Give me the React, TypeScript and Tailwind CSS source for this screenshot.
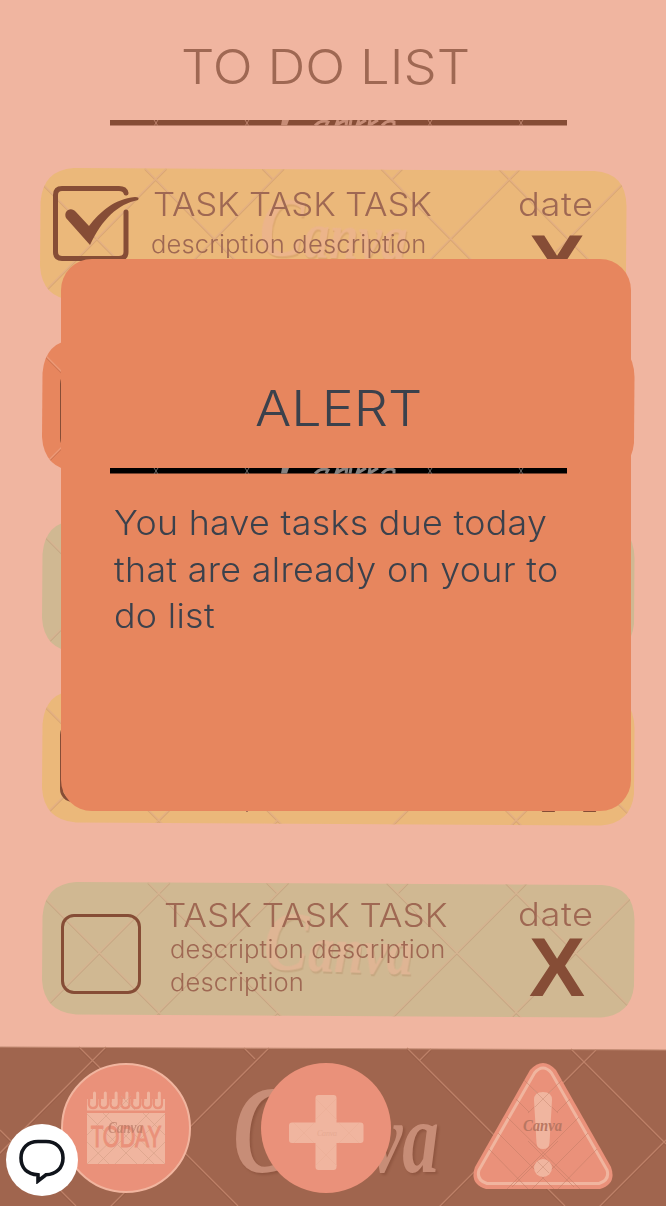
import React from 'react';

const INTER = "font-['Inter','Open_Sans',sans-serif]";

type Mark = { d: string; line: string; shade: string };

function Lines({ d, line, shade }: Mark) {
  return (
    <g fill="none" strokeWidth="1.3">
      <path d={d} stroke={shade} transform="translate(0 1.4)" />
      <path d={d} stroke={line} />
    </g>
  );
}

const CARD_LINES =
  'M-13 0L123 136M106 0L242 136M225 0L236 11M345 0L481 136M464 0L600 136M350 136L356 130M128 0L-8 136M247 0L111 136M367 0L356 11M486 0L350 136M605 0L469 136M230 136L236 130';

type Tint = { fill: string; line: string; shade: string; word: string };

const YELLOW: Tint = { fill: '#ebb87a', line: '#e4b083', shade: '#d9a673', word: '#ecb48a' };
const ORANGE: Tint = { fill: '#e7865e', line: '#ec9a78', shade: '#cd7350', word: '#ec9a78' };
const GREEN: Tint = { fill: '#d0b892', line: '#d6b491', shade: '#c5a683', word: '#dfb594' };

function CardShape({ tint, id }: { tint: Tint; id: string }) {
  const shape =
    'M34 0L561 3Q593 5 593.500 38L593 104Q590 133 560 135.500L34 132.500Q2 130 0 98L0.500 34Q3 2 34 0Z';
  return (
    <svg
      className="absolute inset-0 h-full w-full"
      viewBox="0 0 594 136"
      preserveAspectRatio="none"
      aria-hidden="true"
    >
      <clipPath id={id}>
        <path d={shape} />
      </clipPath>
      <path d={shape} fill={tint.fill} />
      <g clipPath={`url(#${id})`}>
        <Lines d={CARD_LINES} line={tint.line} shade={tint.shade} />
        <text
          x="222"
          y="90"
          textLength="150"
          lengthAdjust="spacingAndGlyphs"
          fontFamily="Liberation Serif"
          fontStyle="italic"
          fontWeight="700"
          fill={tint.word}
          transform="rotate(2 296 70)"
          className="drop-shadow-[1px_2px_0px_rgba(150,90,50,0.18)]"
        >
          <tspan fontSize="84">C</tspan>
          <tspan fontSize="66">anva</tspan>
        </text>
      </g>
    </svg>
  );
}

function CheckedBox() {
  return (
    <svg width="88" height="78" viewBox="0 0 88 78" fill="none" aria-label="Done">
      <path
        d="M74 8Q73 3.500 67 3.500H10Q3.500 3.500 3.500 10V67Q3.500 73.500 10 73.500H67Q74 73.500 74 67V27"
        stroke="#864d36"
        strokeWidth="5"
        strokeLinecap="round"
      />
      <path
        d="M14 33C11 26 19 21 24 27L37 41C48 27 62 14 83 12Q88 12 86 15C66 19 50 34 38 60Z"
        fill="#864d36"
      />
    </svg>
  );
}

function Rule({ color, mark }: { color: string; mark: string }) {
  return (
    <svg width="457" height="6" viewBox="0 0 457 6" className="block" aria-hidden="true">
      <rect width="457" height="5.500" fill={color} />
      <g stroke={mark} strokeWidth="0.800">
        <path d="M44 0L48 6M48 0L44 6M135 0L139 6M139 0L135 6M318 0L322 6M322 0L318 6M409 0L413 6M413 0L409 6" />
      </g>
      <path d="M172 0H179L177 5.500H171Z" fill={mark} />
      <g fill="none" stroke={mark} strokeWidth="3">
        <path d="M205 5.500Q212 -1 218 2L216 5.500M228 0L226 5.500Q232 1 237 0L236 5.500M241 0L240 5.500M249 0L247 5.500L256 0M260 0L259 5.500L268 0M272 5.500Q278 -1 284 2V5.500" />
      </g>
    </svg>
  );
}

type Task = {
  id: string;
  tint: Tint;
  done?: boolean;
  place: string;
  textPad: string;
  datePad: string;
  boxPad: string;
  lines: string[];
};

const OPEN = { textPad: 'pt-[17px]', datePad: 'pt-[16px] pl-[52px]', boxPad: 'pl-[18px]' };
const TWO_LINES = ['description description', 'description'];

const TASKS: Task[] = [
  {
    id: 'task-1',
    tint: YELLOW,
    done: true,
    place: 'ml-[40px] w-[587px]',
    textPad: 'pt-[20px]',
    datePad: 'pt-[20px] pl-[66px]',
    boxPad: 'pl-[12px]',
    lines: ['description description'],
  },
  { id: 'task-2', tint: ORANGE, place: 'mt-[35px] ml-[42px] w-[593px]', ...OPEN, lines: TWO_LINES },
  { id: 'task-3', tint: GREEN, place: 'mt-[45px] ml-[42px] w-[593px]', ...OPEN, boxPad: 'pl-[20px]', lines: TWO_LINES },
  {
    id: 'task-4',
    tint: YELLOW,
    place: 'mt-[34px] ml-[42px] w-[593px]',
    ...OPEN,
    textPad: 'pt-[25px]',
    datePad: 'pt-[24px] pl-[64px]',
    lines: TWO_LINES,
  },
  { id: 'task-5', tint: GREEN, place: 'mt-[56px] ml-[42px] w-[593px]', ...OPEN, boxPad: 'pl-[19px]', lines: TWO_LINES },
];

function TaskCard({ task }: { task: Task }) {
  const done = task.done;
  return (
    <article className={`relative h-[136px] shrink-0 ${task.place}`}>
      <CardShape tint={task.tint} id={task.id} />
      <div className="relative flex h-full">
        <div className={`shrink-0 ${task.boxPad} ${done ? 'w-[112px] pt-[17px]' : 'w-[124px] pt-[32px]'}`}>
          {done ? (
            <CheckedBox />
          ) : (
            <div className="h-[80px] w-[80px] rounded-[13px] border-[3.5px] border-[#864d36]" />
          )}
        </div>
        <div className={`w-[300px] shrink-0 whitespace-nowrap text-[#9f6853] ${task.textPad}`}>
          <h2
            className={`origin-left text-[33px] leading-none font-light ${done ? 'ml-[1px] scale-x-[1.057] tracking-[-0.2px]' : '-ml-[2px] scale-x-[1.064]'}`}
          >
            TASK TASK TASK
          </h2>
          <div
            className={`origin-left scale-x-[1.065] text-[24px] leading-[33px] font-light ${done ? '-ml-[1px] pt-[7px]' : 'ml-[4px] pt-[1px]'}`}
          >
            {task.lines.map((line, i) => (
              <p key={i} className="tracking-[0.15px]">{line}</p>
            ))}
          </div>
        </div>
        <div className={`shrink-0 whitespace-nowrap text-[#9f6853] ${task.datePad}`}>
          <p className="origin-left scale-x-[1.1] text-[33px] leading-none font-light tracking-[0.5px]">date</p>
          <button
            className={`block pl-[11px] font-['Liberation_Sans',sans-serif] text-[84px] leading-[84px] font-bold text-[#864d36] ${done ? 'mt-[1px]' : '-mt-[6px]'}`}
            aria-label="Remove"
          >
            X
          </button>
        </div>
      </div>
    </article>
  );
}

function CalendarIcon() {
  const rings = [0, 1, 2, 3, 4, 5, 6];
  return (
    <svg width="130" height="130" viewBox="0 0 130 130" className="block">
      <circle cx="65" cy="65" r="64" fill="#ea917a" stroke="#f1b59f" strokeWidth="2" />
      <path d="M26 36H104V47.500H26ZM26 50H104V101H26Z" fill="#f0b59f" />
      {rings.map((i) => (
        <g key={i} transform={`translate(${32 + i * 10.8} -1)`} fill="none">
          <path d="M-4 35V42Q-3.500 46 0 46Q4 46 4 42V35" stroke="#ea917a" strokeWidth="2.500" />
          <path d="M1.500 31V41Q1.500 43 -0.500 43Q-1.500 43 -1.500 41" stroke="#f0b59f" strokeWidth="3" strokeLinecap="round" />
        </g>
      ))}
      <g fill="none" stroke="#d9a28a" strokeWidth="0.700">
        <path d="M26 51L76 101M42 50L93 101M26 79L48 101M82 50L104 72M72 70L104 101M104 51L54 101M88 50L37 101M104 79L82 101M48 50L26 72M58 70L26 101M60 33L74 47M70 33L56 47" />
      </g>
      <text
        x="30"
        y="83.500"
        fontFamily="Lato"
        fontWeight="400"
        fontSize="28"
        textLength="70"
        lengthAdjust="spacingAndGlyphs"
        fill="#ea917a"
        stroke="#ea917a"
        strokeWidth="0.900"
      >
        TODAY
      </text>
      <text x="47" y="70" fontFamily="Liberation Serif" fontStyle="italic" fontWeight="700" fontSize="16" textLength="35" lengthAdjust="spacingAndGlyphs" fill="#b37662" opacity="0.65">
        Canva
      </text>
    </svg>
  );
}

function PlusIcon() {
  return (
    <svg width="130" height="130" viewBox="0 0 130 130" className="block">
      <circle cx="65" cy="65" r="65" fill="#ea917a" />
      <path
        d="M57.500 32H72.500Q75.500 32 75.500 35V59.500H99.500Q102.500 59.500 102.500 62.500V77Q102.500 80 99.500 80H75.500V104Q75.500 107 72.500 107H57.500Q54.500 107 54.500 104V80H31Q28 80 28 77V62.500Q28 59.500 31 59.500H54.500V35Q54.500 32 57.500 32Z"
        fill="#f0b59f"
      />
      <g fill="none" stroke="#ebae97" strokeWidth="0.600">
        <path d="M55 36L76 57M75 36L55 56M33 60L53 80M53 60L33 80M78 60L98 80M98 60L78 80M55 82L76 103M75 82L55 102" />
      </g>
      <text x="56" y="73" fontFamily="Liberation Serif" fontStyle="italic" fontSize="8" textLength="20" fill="#e6a992">
        Canva
      </text>
    </svg>
  );
}

function WarningIcon() {
  return (
    <svg width="142" height="128" viewBox="0 0 142 128" className="block">
      <path d="M58 7Q71 -7 84 7L139 104Q145 121 128 126H14Q-3 121 3 104Z" fill="#ea917a" />
      <path
        d="M62.500 10Q71 0 79.500 10L135 107Q138 117 127 120.500H15Q4 117 7 107Z"
        fill="none"
        stroke="#f0b59f"
        strokeWidth="3"
      />
      <g fill="none" stroke="#c47e67" strokeWidth="0.800" opacity="0.7">
        <path d="M52 17L86 50M90 17L56 50M44 36L57 49M98 36L85 49M35 54L108 126M107 54L35 126M26 70L82 126M116 70L60 126M17 86L56 126M125 86L86 126M56 78L102 124M86 78L40 124" />
      </g>
      <path d="M62 37Q62 29 71 29Q80 29 80 37L77.500 80Q77 86 71 86Q65 86 64.500 80Z" fill="#f0b59f" />
      <circle cx="71" cy="105" r="9" fill="#f0b59f" />
      <path d="M62 27L79 44M80 27L63 44M65 98L77 110M77 98L65 110" stroke="#d39780" strokeWidth="0.700" fill="none" />
      <text x="51" y="68" fontFamily="Liberation Serif" fontStyle="italic" fontWeight="700" fontSize="16" textLength="39" lengthAdjust="spacingAndGlyphs" fill="#b97762">
        Canva
      </text>
    </svg>
  );
}

function Footer() {
  return (
    <footer className="relative h-[160px] shrink-0 overflow-hidden">
      <svg className="absolute inset-0" width="666" height="160" viewBox="0 0 666 160" aria-hidden="true">
        <path d="M0 1L666 4V160H0Z" fill="#a0654e" />
        <path d="M0 1L666 4" stroke="#c18a72" strokeWidth="1" />
        <Lines
          d="M79 1L238 160M244 2L255 13M407 2L565 160M571 3L666 98M0 84L76 160M106 1L-5 112M269 2L109 162M431 3L420 14M596 4L436 164M666 94L598 162"
          line="#bd8168"
          shade="#975e48"
        />
        <text
          x="233"
          y="126"
          textLength="206"
          lengthAdjust="spacingAndGlyphs"
          fontFamily="Liberation Serif"
          fontStyle="italic"
          fontWeight="700"
          fill="#c78d77"
          className="drop-shadow-[2px_2px_1px_rgba(120,66,44,0.4)]"
        >
          <tspan fontSize="124">C</tspan>
          <tspan fontSize="102">anva</tspan>
        </text>
      </svg>
      <nav className="relative flex items-start pt-[17px] pl-[60.5px]">
        <button aria-label="Today"><CalendarIcon /></button>
        <button className="ml-[70px]" aria-label="Add task"><PlusIcon /></button>
        <button className="ml-[81px]" aria-label="Alerts"><WarningIcon /></button>
      </nav>
    </footer>
  );
}

function AlertDialog() {
  return (
    <section
      role="dialog"
      className="absolute top-[259px] left-[61px] h-[552px] w-[570px] rounded-[31px] bg-[#e7865e] text-[#3b414c]"
    >
      <h2 className="ml-[194px] origin-left scale-x-[1.1] pt-[125px] text-[49px] leading-none font-light whitespace-nowrap">
        ALERT
      </h2>
      <div className="pt-[35px] pl-[49px]">
        <Rule color="#000000" mark="#85817f" />
      </div>
      <p className="ml-[53px] origin-left scale-x-[1.068] pt-[26px] text-[33.5px] leading-[46.5px] font-light tracking-[0.3px] whitespace-nowrap">
        You have tasks due today
        <br />
        that are already on your to
        <br />
        do list
      </p>
    </section>
  );
}

function ChatButton() {
  return (
    <button
      aria-label="Chat"
      className="absolute top-[1124px] left-[6px] flex h-[72px] w-[72px] items-center justify-center rounded-full bg-white"
    >
      <svg width="48" height="48" viewBox="0 0 48 48" fill="none" className="block">
        <path
          d="M20 5.500H28C38 5.500 45 12 45 22C45 32 38 38.500 28 38.800L20 45V38.800C9 38 3 32 3 22C3 12 10 5.500 20 5.500Z"
          stroke="#10141b"
          strokeWidth="3.600"
        />
      </svg>
    </button>
  );
}

export default function App() {
  return (
    <div className={`relative flex h-[1206px] w-[666px] flex-col overflow-hidden bg-[#f0b5a0] ${INTER}`}>
      <header className="h-[168px] shrink-0 pt-[43px]">
        <h1 className="ml-[181px] origin-left scale-x-[1.084] text-[48.5px] leading-none font-light whitespace-nowrap text-[#9f6853]">
          TO DO LIST
        </h1>
        <div className="pt-[28.5px] pl-[110px]">
          <Rule color="#864d36" mark="#c78d77" />
        </div>
      </header>
      <main className="flex h-[878px] shrink-0 flex-col">
        {TASKS.map((task) => (
          <TaskCard key={task.id} task={task} />
        ))}
      </main>
      <Footer />
      <AlertDialog />
      <ChatButton />
    </div>
  );
}
